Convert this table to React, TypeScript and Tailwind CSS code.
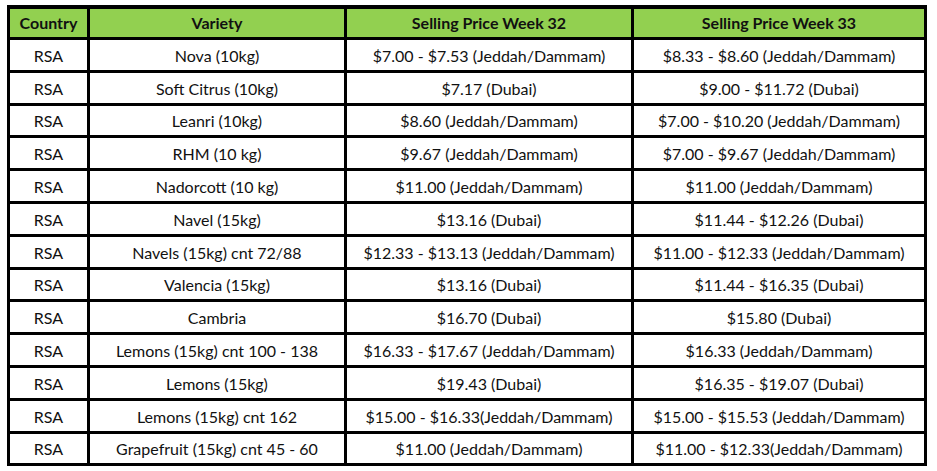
import React from "react";

const rows: [string, string, string, string][] = [
  ["RSA", "Nova (10kg)", "$7.00 - $7.53 (Jeddah/Dammam)", "$8.33 - $8.60 (Jeddah/Dammam)"],
  ["RSA", "Soft Citrus (10kg)", "$7.17 (Dubai)", "$9.00 - $11.72 (Dubai)"],
  ["RSA", "Leanri (10kg)", "$8.60 (Jeddah/Dammam)", "$7.00 - $10.20 (Jeddah/Dammam)"],
  ["RSA", "RHM (10 kg)", "$9.67 (Jeddah/Dammam)", "$7.00 - $9.67 (Jeddah/Dammam)"],
  ["RSA", "Nadorcott (10 kg)", "$11.00 (Jeddah/Dammam)", "$11.00 (Jeddah/Dammam)"],
  ["RSA", "Navel (15kg)", "$13.16 (Dubai)", "$11.44 - $12.26 (Dubai)"],
  ["RSA", "Navels (15kg) cnt 72/88", "$12.33 - $13.13 (Jeddah/Dammam)", "$11.00 - $12.33 (Jeddah/Dammam)"],
  ["RSA", "Valencia (15kg)", "$13.16 (Dubai)", "$11.44 - $16.35 (Dubai)"],
  ["RSA", "Cambria", "$16.70 (Dubai)", "$15.80 (Dubai)"],
  ["RSA", "Lemons (15kg) cnt 100 - 138", "$16.33 - $17.67 (Jeddah/Dammam)", "$16.33 (Jeddah/Dammam)"],
  ["RSA", "Lemons (15kg)", "$19.43 (Dubai)", "$16.35 - $19.07 (Dubai)"],
  ["RSA", "Lemons (15kg) cnt 162", "$15.00 - $16.33(Jeddah/Dammam)", "$15.00 - $15.53 (Jeddah/Dammam)"],
  ["RSA", "Grapefruit (15kg) cnt 45 - 60", "$11.00 (Jeddah/Dammam)", "$11.00 - $12.33(Jeddah/Dammam)"],
];

const headers = ["Country", "Variety", "Selling Price Week 32", "Selling Price Week 33"];

export default function App() {
  return (
    <div className="w-[937px] h-[471px] bg-white pl-[7px] pt-[5px]" style={{ fontFamily: "Lato, 'Open Sans', sans-serif" }}>
      <div className="grid w-[920px] bg-black gap-[3px] p-[3px] pt-[4px] grid-cols-[77px_254px_284px_290px] grid-rows-[28px_repeat(13,29.8px)] text-[16px] text-[#111]">
        {headers.map((h) => (
          <div key={h} className="bg-[#92d050] flex items-center justify-center font-bold">
            {h}
          </div>
        ))}
        {rows.map((r, i) =>
          r.map((c, j) => (
            <div key={i + "-" + j} className="bg-white flex items-center justify-center pt-[2px]">
              {c}
            </div>
          ))
        )}
      </div>
    </div>
  );
}
